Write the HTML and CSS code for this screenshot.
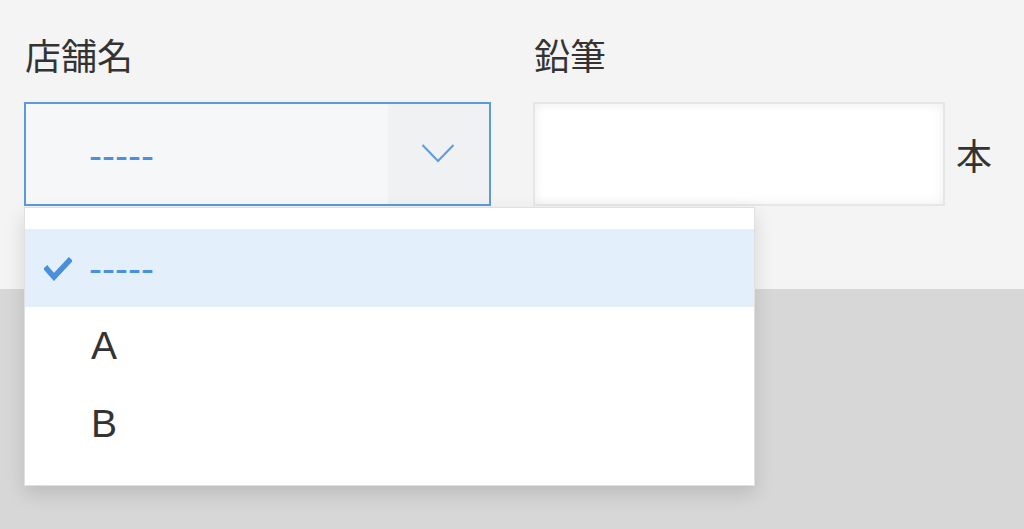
FILE: index.html
```html
<!DOCTYPE html>
<html lang="ja">
<head>
<meta charset="utf-8">
<link rel="stylesheet" href="styles.css">
</head>
<body>
<div class="page">
  <div class="form-row">
    <div class="field field-select">
      <div class="label">店舗名</div>
      <div class="select">
        <div class="select-value">-----</div>
        <div class="select-btn">
          <svg width="34" height="22" viewBox="0 0 34 22"><polyline points="1.5,2 17,18 32.5,2" fill="none" stroke="#5b9ddf" stroke-width="2"/></svg>
        </div>
        <ul class="menu">
          <li class="menu-item selected">
            <svg class="check" width="28" height="24" viewBox="0 0 28 24"><polyline points="3,12 10,20 25,4" fill="none" stroke="#4a8fdb" stroke-width="5.5" stroke-linecap="square" stroke-linejoin="miter"/></svg>
            <span class="dash">-----</span>
          </li>
          <li class="menu-item letter">A</li>
          <li class="menu-item letter">B</li>
        </ul>
      </div>
    </div>
    <div class="field field-input">
      <div class="label">鉛筆</div>
      <div class="input-wrap">
        <div class="input"></div>
        <span class="unit">本</span>
      </div>
    </div>
  </div>
</div>
</body>
</html>
```
FILE: styles.css
```css
html, body {
  margin: 0;
  padding: 0;
}
body {
  background: #d6d7d6;
  font-family: "Liberation Sans", "Noto Sans CJK JP", sans-serif;
  color: #333;
  width: 1024px;
  height: 529px;
  overflow: hidden;
}
.page {
  background: #f4f4f4;
  height: 289px;
}
.form-row {
  display: flex;
  gap: 42px;
  padding: 34px 0 0 24px;
}
.field {
  display: flex;
  flex-direction: column;
}
.label {
  font-family: "Noto Sans CJK JP", sans-serif;
  font-size: 36px;
  line-height: 40px;
  height: 40px;
  margin-bottom: 28px;
  padding-left: 1px;
  color: #333;
}
.select {
  position: relative;
  width: 467px;
  height: 104px;
  box-sizing: border-box;
  border: 2px solid #5b9bdc;
  background: #f6f7f9;
  display: flex;
}
.select-value {
  flex: 1;
  display: flex;
  align-items: center;
  padding-left: 63px;
  padding-top: 4px;
  font-size: 39px;
  color: #4a90e2;
}
.select-btn {
  width: 99px;
  background: #eff1f3;
  display: flex;
  align-items: center;
  justify-content: center;
  padding-right: 2px;
}
.menu {
  position: absolute;
  left: -2px;
  top: 103px;
  width: 731px;
  box-sizing: border-box;
  margin: 0;
  padding: 21px 0 22px;
  list-style: none;
  background: #fff;
  border: 1px solid #e0e0e0;
  box-shadow: 0 8px 18px rgba(0, 0, 0, 0.13);
  z-index: 2;
}
.menu-item {
  height: 78px;
  display: flex;
  align-items: center;
  padding-left: 64px;
  font-size: 39px;
  color: #333;
  position: relative;
}
.menu-item.letter {
  padding-left: 66px;
}
.menu-item.selected {
  background: #e3effb;
  color: #4a90e2;
}
.check {
  position: absolute;
  left: 19px;
  top: 28px;
}
.dash {
  padding-top: 2px;
}
.input-wrap {
  display: flex;
  align-items: center;
  gap: 11px;
}
.input {
  width: 412px;
  height: 104px;
  box-sizing: border-box;
  border: 2px solid #e4e6e8;
  background: #fff;
  box-shadow: inset 0 0 12px rgba(0, 0, 0, 0.07);
}
.unit {
  font-family: "Noto Sans CJK JP", sans-serif;
  font-size: 36px;
  color: #333;
}
```
